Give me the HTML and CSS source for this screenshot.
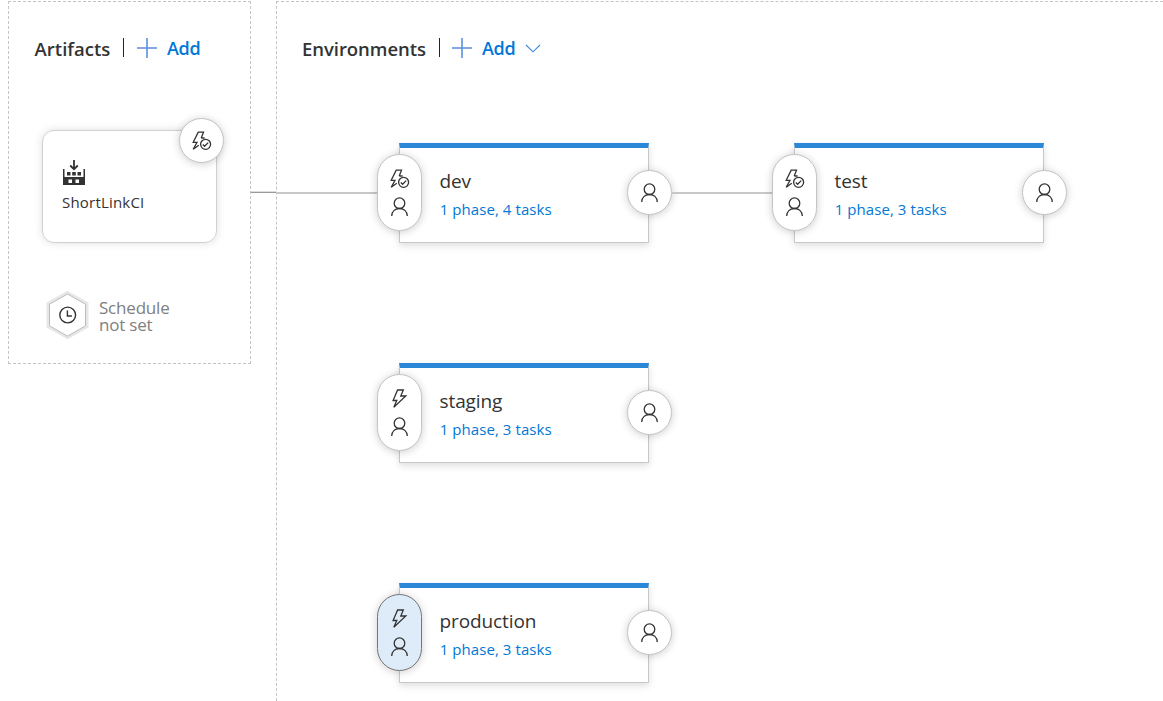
FILE: index.html
```
<!DOCTYPE html>
<html lang="en">
<head>
<meta charset="utf-8">
<title>Release pipeline</title>
<link rel="stylesheet" href="styles.css">
</head>
<body>
<svg class="symbols" aria-hidden="true">
  <symbol id="person" viewBox="0 0 18 20"><circle cx="8.5" cy="6.2" r="5.3"/><path d="M.7 19C.9 14.2 4.3 11.5 8.5 11.5S16.1 14.2 16.3 19"/></symbol>
  <symbol id="bolt" viewBox="0 0 18 20"><path d="M6.6 1H12.3L9.8 7H14.8L2.8 18.3L5.8 11.5H2.1Z"/></symbol>
  <symbol id="bolt-check" viewBox="0 0 20 20"><path d="M9.2 7L11.5 1.2H6.2L1.2 11.3H5L1.2 18.3L6.8 14.2M9.2 7H12.6"/><circle cx="13.6" cy="13.3" r="5"/><path d="M10.8 13.5L12.6 15.3L16.2 11.6"/></symbol>
  <symbol id="plus" viewBox="0 0 20 20"><path class="plus-h" d="M0 10H20"/><path class="plus-v" d="M10 0V20"/></symbol>
</svg>
<main class="pipeline">
  <section class="artifacts">
    <header class="heading"><h2>Artifacts</h2><span class="divider"></span><svg class="plus"><use href="#plus"/></svg><a class="add">Add</a></header>
    <div class="artifact">
      <svg class="build" viewBox="0 0 22 26"><path class="line" d="M11 1V10M7.2 6.5L11 10.2L14.8 6.5"/><path class="fill" d="M0 10H1.5V18H20.5V10H22V26H0ZM4 13H7.5V16.5H4ZM9.2 13H12.8V16.5H9.2ZM14.5 13H18V16.5H14.5Z"/><path class="window" d="M5.5 20.5H9V24H5.5ZM12.5 20.5H16V24H12.5Z"/></svg>
      <span class="artifact-name">ShortLinkCI</span>
      <span class="round trigger"><svg class="icon check"><use href="#bolt-check"/></svg></span>
    </div>
    <div class="schedule">
      <svg class="hexagon" viewBox="0 0 44 50"><path class="halo" d="M22.5 2.5L42 13.5V36.5L22.5 47.5L3 36.5V13.5Z"/><path class="edge" d="M22.5 4L40.5 14.2V35.8L22.5 46.2L4.5 35.8V14.2Z"/><circle cx="22.7" cy="25" r="7.9"/><path class="hand" d="M22.4 20.5V26H26.9"/></svg>
      <div class="schedule-text"><span>Schedule</span><span>not set</span></div>
    </div>
  </section>
  <div class="bridge"></div>
  <section class="environments">
    <header class="heading"><h2>Environments</h2><span class="divider"></span><svg class="plus"><use href="#plus"/></svg><a class="add">Add</a><svg class="chevron" viewBox="0 0 16 9"><path d="M1 1L8 7.8L15 1"/></svg></header>
    <div class="stages">
      <article class="stage"><i class="link"></i><h3>dev</h3><a>1 phase, 4 tasks</a>
        <span class="pill"><svg class="icon check"><use href="#bolt-check"/></svg><svg class="icon"><use href="#person"/></svg></span><span class="round approver"><svg class="icon"><use href="#person"/></svg></span></article>
      <article class="stage"><i class="link"></i><h3>test</h3><a>1 phase, 3 tasks</a>
        <span class="pill"><svg class="icon check"><use href="#bolt-check"/></svg><svg class="icon"><use href="#person"/></svg></span><span class="round approver"><svg class="icon"><use href="#person"/></svg></span></article>
      <article class="stage first"><h3>staging</h3><a>1 phase, 3 tasks</a>
        <span class="pill"><svg class="icon"><use href="#bolt"/></svg><svg class="icon"><use href="#person"/></svg></span><span class="round approver"><svg class="icon"><use href="#person"/></svg></span></article>
      <article class="stage first"><h3>production</h3><a>1 phase, 3 tasks</a>
        <span class="pill selected"><svg class="icon"><use href="#bolt"/></svg><svg class="icon"><use href="#person"/></svg></span><span class="round approver"><svg class="icon"><use href="#person"/></svg></span></article>
    </div>
  </section>
</main>
</body>
</html>
```
FILE: styles.css
```
* { box-sizing: border-box; }
body { margin: 0; background: #fff; color: #333; font-family: "Open Sans", "Noto Sans", sans-serif; overflow: hidden; }
h2, h3 { margin: 0; }
svg { display: block; fill: none; flex: none; }
.symbols { position: absolute; width: 0; height: 0; }
.pipeline { display: flex; align-items: flex-start; height: 701px; padding: 1px 0 0 8px; overflow: hidden; }
.artifacts { width: 243px; height: 363px; flex: none; border: 1px dashed #c4c4c4; padding: 33px 0 0 25px; }
.bridge { width: 25px; height: 2px; margin-top: 190px; flex: none; background: #999; border-top: 1px solid #ddd; }
.environments { flex: 1; height: 720px; border: 1px dashed #c4c4c4; border-right: 0; padding: 33px 0 0 25px; min-width: 0; }
.heading { display: flex; align-items: center; height: 26px; }
.heading h2, .add { font-size: 18.5px; line-height: 26px; font-weight: 600; white-space: nowrap; }
.heading h2 { width: 77px; padding-top: 1px; }
.artifacts h2 { text-indent: .6px; }
.environments h2 { width: 125px; letter-spacing: -.05px; }
.divider { width: 1px; height: 19px; background: #222; margin: 0 13px 1px 12px; }
.environments .divider { margin-right: 12px; }
.plus { width: 20px; height: 20px; }
.plus-h { stroke: #86a7e5; stroke-width: 2; }
.plus-v { stroke: #5791df; stroke-width: 1.6; }
.heading .add { color: #0078d7; margin-left: 10px; width: 33px; font-size: 18px; letter-spacing: -.3px; }
.chevron { width: 16px; height: 9px; margin-left: 10px; stroke: #3b88db; stroke-width: 1.1; }
.artifact { position: relative; display: flex; flex-direction: column; align-items: flex-start; width: 175px; height: 113px; margin: 69px 0 0 8px; padding: 28px 0 0 20px; border: 1px solid #d0d0d0; border-radius: 12px; box-shadow: 0 0 9px rgba(0,0,0,.13); }
.build { width: 22px; height: 26px; }
.build .line { stroke: #333; stroke-width: 1.8; }
.build .fill { fill: #333; }
.build .window { fill: #fff; }
.artifact-name { margin: 5px 0 0 -1px; font-size: 15px; line-height: 24px; letter-spacing: .2px; }
.round { position: absolute; display: flex; align-items: center; justify-content: center; width: 45px; height: 45px; border: 1px solid #c4c4c4; border-radius: 50%; background: #fff; box-shadow: 0 1px 8px rgba(0,0,0,.2); }
.trigger { right: -8px; top: -13px; }
.icon { width: 18px; height: 20px; stroke: #333; stroke-width: 1.3; }
.icon.check { width: 20px; }
.schedule { display: flex; align-items: center; gap: 10px; margin: 47px 0 0 11px; color: #808080; font-size: 17px; line-height: 17px; }
.schedule-text { display: flex; flex-direction: column; padding-top: 2px; letter-spacing: -.2px; }
.hexagon { width: 44px; height: 50px; }
.halo { stroke: #e7e7e7; stroke-width: 3; }
.edge { stroke: #bbb; stroke-width: 1; fill: #fff; }
.hexagon circle, .hand { stroke: #333; stroke-width: 1.4; }
.stages { display: grid; grid-template-columns: 250px 250px; grid-auto-rows: 100px; gap: 120px 145px; margin: 82px 0 0 97px; }
.stage { position: relative; border: 1px solid #c8c8c8; border-top: 5px solid #2b88d8; padding: 19px 0 0 40px; box-shadow: 0 3px 7px rgba(0,0,0,.13); }
.stage.first { grid-column: 1; }
.stage h3 { font-size: 19px; line-height: 28px; font-weight: 400; letter-spacing: -.1px; text-indent: -.5px; }
.stage a { display: block; font-size: 15px; line-height: 28px; color: #0078d7; letter-spacing: .07px; text-indent: -.3px; }
.pill { position: absolute; left: -23px; top: 6px; display: flex; flex-direction: column; align-items: center; justify-content: center; gap: 8px; width: 45px; height: 77px; border: 1px solid #c4c4c4; border-radius: 23px; background: #fff; box-shadow: 0 1px 8px rgba(0,0,0,.2); }
.pill.selected { background: #deecf9; border-color: #767676; }
.approver { right: -24px; top: 22px; }
.link { position: absolute; top: 44px; left: -123px; width: 100px; height: 2px; background: #c8c8c8; }
```
